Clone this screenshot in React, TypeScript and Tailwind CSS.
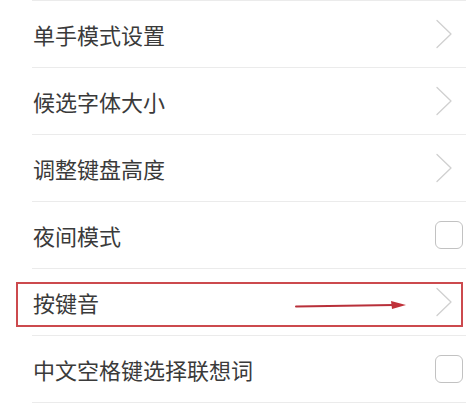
import React from 'react';

type Row = { label: string; kind: 'chevron' | 'checkbox' };

const ROWS: Row[] = [
    { label: '单手模式设置', kind: 'chevron' },
    { label: '候选字体大小', kind: 'chevron' },
    { label: '调整键盘高度', kind: 'chevron' },
    { label: '夜间模式', kind: 'checkbox' },
    { label: '按键音', kind: 'chevron' },
    { label: '中文空格键选择联想词', kind: 'checkbox' },
];

const Chevron = () => (
    <svg width="18" height="30" viewBox="0 0 18 30" fill="none" stroke="#d0d0d0" strokeWidth="1.3" strokeLinecap="round" strokeLinejoin="round">
        <path d="M2 1.5 L16 15 L2 28.5" />
    </svg>
);

const Checkbox = () => (
    <div className="w-[28px] h-[28px] rounded-[6px] border-[1.5px] border-[#c2c2c2] bg-white" />
);

export default function App() {
    return (
        <div
            className="relative w-[472px] h-[405px] bg-white overflow-hidden"
            style={{ fontFamily: '"Noto Sans CJK SC", "Noto Sans", sans-serif' }}
        >
            <div className="ml-[32px] mr-[6px] border-t border-[#ebebeb]">
                {ROWS.map((row) => (
                    <div key={row.label} className="h-[67px] flex items-center justify-between border-b border-[#ebebeb]">
                        <span className="pl-[1px] text-[22px] leading-none text-[#3a3a3a]">{row.label}</span>
                        {row.kind === 'chevron' ? (
                            <div className="mr-[13px]"><Chevron /></div>
                        ) : (
                            <div className="mr-[3px]"><Checkbox /></div>
                        )}
                    </div>
                ))}
            </div>

            {/* Annotation: highlight box + arrow */}
            <div className="absolute left-[16px] top-[282px] w-[447px] h-[45px] border-2 border-[#cc4a4e] pointer-events-none" />
            <svg className="absolute left-[294px] top-[298px]" width="114" height="14" viewBox="0 0 114 14">
                <path d="M2 8.5 L100 7" stroke="#b8303a" strokeWidth="2" strokeLinecap="round" />
                <path d="M112 7 L97 3 L98 11 Z" fill="#c0323a" />
            </svg>
        </div>
    );
}
